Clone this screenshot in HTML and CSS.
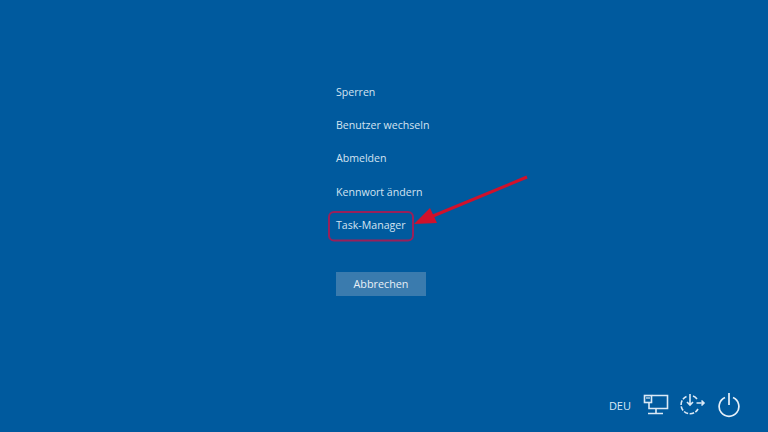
FILE: index.html
```html
<!DOCTYPE html>
<html lang="de">
<head>
<meta charset="utf-8">
<title>Sicherheitsoptionen</title>
<link rel="stylesheet" href="styles.css">
</head>
<body>
<main class="screen">
  <nav class="menu">
    <a class="item">Sperren</a>
    <a class="item">Benutzer wechseln</a>
    <a class="item">Abmelden</a>
    <a class="item">Kennwort ändern</a>
    <a class="item">Task-Manager</a>
    <button class="cancel">Abbrechen</button>
  </nav>
  <footer class="tray">
    <span class="lang">DEU</span>
    <svg class="icon net" width="26" height="22" viewBox="0 0 26 22" fill="none" stroke="#dbe9f6" stroke-width="1.6">
      <path d="M9 1.500H24.500V14.500H6V9"/>
      <rect x="1.500" y="1.500" width="7" height="7"/>
      <path d="M3 4H7" stroke-width="1.200"/>
      <path d="M13 14.500V19M5 19.500H20"/>
    </svg>
    <svg class="icon access" width="26" height="22" viewBox="0 0 26 22" fill="none" stroke="#dbe9f6" stroke-width="1.600">
      <path d="M6.500 2.500A9 9 0 1 0 18 15" stroke-dasharray="4.500 1.500"/>
      <path d="M13 2A9 9 0 0 1 17 5"/>
      <path d="M10 0V11M7 8L10 11L13 8"/>
      <path d="M16.500 9H24M21.500 6.500L24 9L21.500 11.500"/>
    </svg>
    <svg class="icon power" width="22" height="26" viewBox="0 0 22 26" fill="none" stroke="#e6f0f9" stroke-width="1.700">
      <path d="M7 5.500A9.850 9.850 0 1 0 15 5.500"/>
      <path d="M11 1V13"/>
    </svg>
  </footer>
  <svg class="callout" width="210" height="70" viewBox="0 0 210 70" fill="none">
    <rect x="1" y="37" width="84" height="28.500" rx="5" stroke="#99205a" stroke-width="2"/>
    <path d="M199 2L105 41" stroke="#d0112b" stroke-width="3"/>
    <path d="M86 49L102 33L109 48Z" fill="#d0112b"/>
  </svg>
</main>
</body>
</html>
```

FILE: styles.css
```css
html, body {
  margin: 0;
  padding: 0;
}

.screen {
  position: relative;
  width: 768px;
  height: 432px;
  overflow: hidden;
  background: #005a9e;
  font-family: "Open Sans", "Noto Sans", sans-serif;
  color: #d3e3f1;
}

.menu {
  display: flex;
  flex-direction: column;
  align-items: flex-start;
  padding: 83px 0 0 336px;
}

.item {
  height: 33.2px;
  font-size: 10.6px;
  line-height: 18px;
  white-space: nowrap;
}

.cancel {
  width: 90px;
  height: 24px;
  margin-top: 23px;
  padding: 0;
  border: 0;
  background: #3a7bae;
  color: #e8f0f7;
  font: inherit;
  font-size: 10.8px;
}

.tray {
  position: absolute;
  right: 28px;
  bottom: 14px;
  display: flex;
  align-items: center;
}

.lang {
  margin-right: 12px;
  font-size: 11px;
  color: #dbe9f6;
}

.icon {
  display: block;
}

.net {
  margin-right: 11px;
}

.access {
  margin-right: 12px;
}

.callout {
  position: absolute;
  left: 328px;
  top: 175px;
}
```
